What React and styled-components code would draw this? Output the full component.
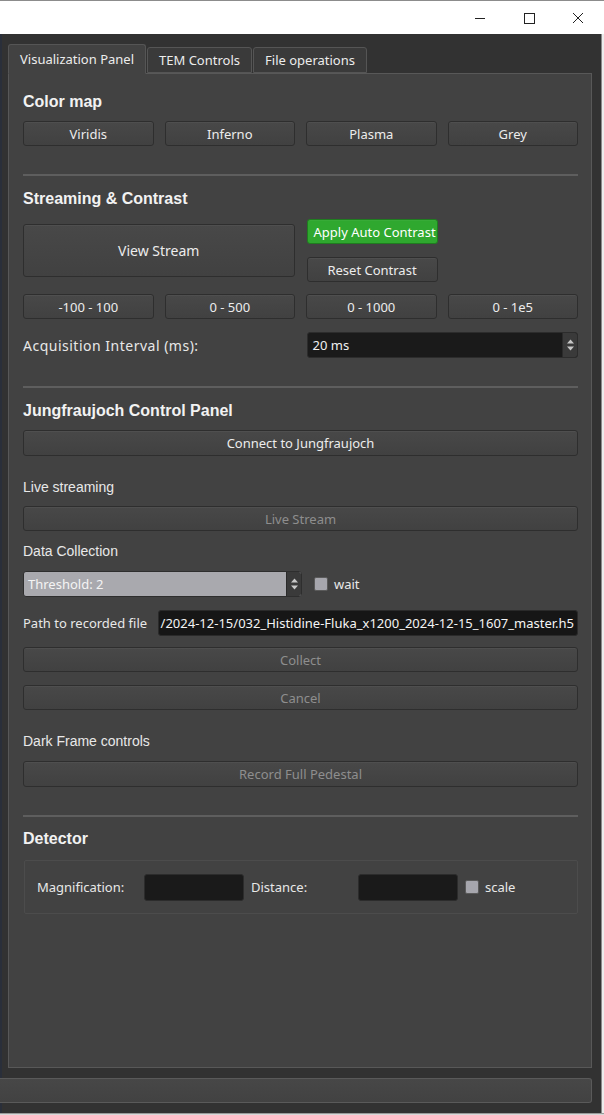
import React from "react";
import styled, { createGlobalStyle } from "styled-components";

const GlobalStyle = createGlobalStyle`
  html, body {
    margin: 0;
    padding: 0;
    background: #323232;
  }
  * {
    box-sizing: border-box;
  }
`;

const colorMaps = ["Viridis", "Inferno", "Plasma", "Grey"];
const ranges = ["-100 - 100", "0 - 500", "0 - 1000", "0 - 1e5"];

const SpinArrows = () => (
  <ArrowBox>
    <svg width="9" height="16" viewBox="0 0 9 16">
      <path d="M1 6.5 L4.5 2.5 L8 6.5 Z" fill="#c8c8c8" />
      <path d="M1 9.5 L4.5 13.5 L8 9.5 Z" fill="#c8c8c8" />
    </svg>
  </ArrowBox>
);

const App = () => {
  return (
    <>
      <GlobalStyle />
      <Window>
        <TitleBar>
          <WinButton>
            <svg width="12" height="12" viewBox="0 0 12 12">
              <path d="M1 6.5 H11" stroke="#222" strokeWidth="1" />
            </svg>
          </WinButton>
          <WinButton>
            <svg width="12" height="12" viewBox="0 0 12 12">
              <rect x="1.5" y="1.5" width="10" height="10" fill="none" stroke="#222" strokeWidth="1" />
            </svg>
          </WinButton>
          <WinButton>
            <svg width="12" height="12" viewBox="0 0 12 12">
              <path d="M1 1 L11 11 M11 1 L1 11" stroke="#222" strokeWidth="1" />
            </svg>
          </WinButton>
        </TitleBar>
        <Body>
          <Main>
            <TabArea>
              <TabBar>
                <Tab $active>Visualization Panel</Tab>
                <Tab>TEM Controls</Tab>
                <Tab>File operations</Tab>
              </TabBar>
              <Panel>
                <Heading>Color map</Heading>
                <ButtonRow $mt={11}>
                  {colorMaps.map((c) => (
                    <Button key={c}>{c}</Button>
                  ))}
                </ButtonRow>
                <Separator $mt={28} />

                <Heading $mt={13}>Streaming &amp; Contrast</Heading>
                <StreamGrid>
                  <Button $h={53} $big>View Stream</Button>
                  <StackCol>
                    <GreenButton>Apply Auto Contrast</GreenButton>
                    <Button>Reset Contrast</Button>
                  </StackCol>
                </StreamGrid>
                <ButtonRow $mt={12}>
                  {ranges.map((r) => (
                    <Button key={r}>{r}</Button>
                  ))}
                </ButtonRow>
                <HalfRow $mt={13}>
                  <FormLabel $wide>Acquisition Interval (ms):</FormLabel>
                  <SpinBox>
                    <SpinText>20 ms</SpinText>
                    <SpinArrows />
                  </SpinBox>
                </HalfRow>
                <Separator $mt={28} />

                <Heading $mt={13}>Jungfraujoch Control Panel</Heading>
                <Button $mt={11} $h={26}>Connect to Jungfraujoch</Button>
                <SubLabel $mt={23}>Live streaming</SubLabel>
                <Button $mt={11} disabled>Live Stream</Button>
                <SubLabel $mt={12}>Data Collection</SubLabel>
                <ThresholdRow>
                  <ThresholdBox>
                    <ThresholdText>Threshold: 2</ThresholdText>
                    <SpinArrows />
                  </ThresholdBox>
                  <CheckRow>
                    <CheckBox />
                    <CheckText>wait</CheckText>
                  </CheckRow>
                </ThresholdRow>
                <PathRow>
                  <FormLabel>Path to recorded file</FormLabel>
                  <PathEdit>
                    <span>/2024-12-15/032_Histidine-Fluka_x1200_2024-12-15_1607_master.h5</span>
                  </PathEdit>
                </PathRow>
                <Button $mt={11} disabled>Collect</Button>
                <Button $mt={13} disabled>Cancel</Button>
                <SubLabel $mt={23}>Dark Frame controls</SubLabel>
                <Button $mt={12} $h={26} disabled>Record Full Pedestal</Button>
                <Separator $mt={28} />

                <Heading $mt={12}>Detector</Heading>
                <GroupBox>
                  <FormLabel $w={107}>Magnification:</FormLabel>
                  <SmallEdit />
                  <FormLabel $w={107} $ml={7}>Distance:</FormLabel>
                  <SmallEdit />
                  <CheckRow $ml={7}>
                    <CheckBox />
                    <CheckText>scale</CheckText>
                  </CheckRow>
                </GroupBox>
              </Panel>
            </TabArea>
            <BottomBar />
          </Main>
          <RightEdge />
        </Body>
        <BottomLine />
      </Window>
    </>
  );
};

export default App;

const Window = styled.div`
  width: 604px;
  height: 1115px;
  display: flex;
  flex-direction: column;
  background: #323232;
  overflow: hidden;
`;

const TitleBar = styled.div`
  height: 34px;
  flex-shrink: 0;
  background: #ffffff;
  border-top: 1px solid #8c8c8c;
  display: flex;
  justify-content: flex-end;
  align-items: center;
  padding-right: 2px;
`;

const WinButton = styled.div`
  width: 49px;
  height: 32px;
  display: flex;
  align-items: center;
  justify-content: center;
`;

const Body = styled.div`
  flex: 1;
  display: flex;
`;

const Main = styled.div`
  width: 601px;
  display: flex;
  flex-direction: column;
  padding-top: 10px;
  border-left: 2px solid #2a2f3a;
`;

const RightEdge = styled.div`
  width: 3px;
  background: #ececec;
  border-left: 1px solid #8a8a8a;
`;

const BottomLine = styled.div`
  height: 2px;
  background: #d8d8d8;
  border-top: 1px solid #9a9a9a;
`;

const TabArea = styled.div`
  padding: 0 9px 0 6px;
  display: flex;
  flex-direction: column;
`;

const TabBar = styled.div`
  display: flex;
  align-items: flex-end;
  height: 29px;
  gap: 1px;
  position: relative;
  z-index: 1;
`;

const Tab = styled.div`
  height: ${(p) => (p.$active ? "30px" : "26px")};
  margin-bottom: ${(p) => (p.$active ? "-1px" : "0")};
  padding: ${(p) => (p.$active ? "0 11px" : "0 11px")};
  display: flex;
  align-items: center;
  background: ${(p) => (p.$active ? "#424242" : "#3a3a3a")};
  border: 1px solid #555555;
  border-bottom: ${(p) => (p.$active ? "1px solid #424242" : "1px solid #555555")};
  border-radius: 3px 3px 0 0;
  color: #ececec;
  font-family: "Noto Sans", "Open Sans", sans-serif;
  font-size: 13px;
`;

const Panel = styled.div`
  height: 995px;
  background: #424242;
  border: 1px solid #585858;
  padding: 18px 13px 0 14px;
  display: flex;
  flex-direction: column;
`;

const Heading = styled.div`
  margin-top: ${(p) => p.$mt || 0}px;
  height: 18px;
  line-height: 20px;
  font-family: "Liberation Sans", Arial, sans-serif;
  font-weight: 700;
  font-size: 16px;
  color: #f2f2f2;
`;

const SubLabel = styled.div`
  margin-top: ${(p) => p.$mt || 0}px;
  height: 16px;
  line-height: 16px;
  font-family: "Liberation Sans", Arial, sans-serif;
  font-size: 14px;
  color: #e8e8e8;
`;

const FormLabel = styled.div`
  flex-shrink: 0;
  width: ${(p) => (p.$w ? `${p.$w}px` : "auto")};
  margin-left: ${(p) => p.$ml || 0}px;
  font-family: "Noto Sans", "Open Sans", sans-serif;
  font-size: ${(p) => (p.$wide ? "14px" : "13px")};
  letter-spacing: ${(p) => (p.$wide ? "0.5px" : "0")};
  color: #e8e8e8;
  white-space: nowrap;
`;

const Separator = styled.div`
  margin-top: ${(p) => p.$mt || 0}px;
  height: 2px;
  background: #5e5e5e;
`;

const ButtonRow = styled.div`
  margin-top: ${(p) => p.$mt || 0}px;
  display: grid;
  grid-template-columns: repeat(4, 1fr);
  gap: 11px;
`;

const Button = styled.button`
  margin-top: ${(p) => p.$mt || 0}px;
  height: ${(p) => p.$h || 25}px;
  width: 100%;
  padding: 0 6px;
  background: linear-gradient(#484848, #414141);
  border: 1px solid #2e2e2e;
  border-radius: 3px;
  box-shadow: inset 0 1px 0 rgba(255, 255, 255, 0.04);
  color: ${(p) => (p.disabled ? "#8e8e8e" : "#ececec")};
  font-family: "Noto Sans", "Open Sans", sans-serif;
  font-size: ${(p) => (p.$big ? "14px" : "13px")};
  white-space: nowrap;
`;

const GreenButton = styled(Button)`
  background: #2fa82f;
  border: 1px solid #1f7d1f;
  color: #ffffff;
`;

const StreamGrid = styled.div`
  margin-top: 12px;
  display: grid;
  grid-template-columns: 1fr 1fr;
  column-gap: 12px;
  align-items: center;
`;

const StackCol = styled.div`
  display: flex;
  flex-direction: column;
  gap: 13px;
  width: 131px;
`;

const HalfRow = styled.div`
  margin-top: ${(p) => p.$mt || 0}px;
  display: grid;
  grid-template-columns: 1fr 1fr;
  column-gap: 12px;
  align-items: center;
`;

const SpinBox = styled.div`
  height: 26px;
  display: flex;
  background: #1a1a1a;
  border: 1px solid #2c2c2c;
  border-radius: 3px;
  overflow: hidden;
`;

const SpinText = styled.div`
  flex: 1;
  display: flex;
  align-items: center;
  padding-left: 5px;
  font-family: "Noto Sans", "Open Sans", sans-serif;
  font-size: 13px;
  color: #f0f0f0;
`;

const ArrowBox = styled.div`
  width: 15px;
  display: flex;
  align-items: center;
  justify-content: center;
  background: #3a3a3a;
  border-left: 1px solid #2a2a2a;
`;

const ThresholdRow = styled.div`
  margin-top: 12px;
  display: flex;
  align-items: center;
`;

const ThresholdBox = styled.div`
  width: 279px;
  height: 26px;
  display: flex;
  border: 1px solid #2e2e2e;
  border-radius: 3px;
  overflow: hidden;
  background: #a9a9ae;
`;

const ThresholdText = styled.div`
  flex: 1;
  display: flex;
  align-items: center;
  padding-left: 4px;
  font-family: "Noto Sans", "Open Sans", sans-serif;
  font-size: 13px;
  color: #f4f4f4;
`;

const CheckRow = styled.div`
  display: flex;
  align-items: center;
  gap: 6px;
  margin-left: ${(p) => (p.$ml !== undefined ? p.$ml : 12)}px;
`;

const CheckBox = styled.div`
  width: 14px;
  height: 14px;
  background: #a6a6ad;
  border: 1px solid #5a5a5a;
  border-radius: 2px;
`;

const CheckText = styled.span`
  font-family: "Noto Sans", "Open Sans", sans-serif;
  font-size: 13px;
  color: #e8e8e8;
`;

const PathRow = styled.div`
  margin-top: 13px;
  display: flex;
  align-items: center;
  gap: 11px;
`;

const PathEdit = styled.div`
  flex: 1;
  height: 26px;
  display: flex;
  align-items: center;
  justify-content: flex-end;
  overflow: hidden;
  padding: 0 3px;
  background: #161616;
  border: 1px solid #2a2a2a;
  border-radius: 3px;
  font-family: "Noto Sans", "Open Sans", sans-serif;
  font-size: 13px;
  color: #f4f4f4;
  white-space: nowrap;
`;

const GroupBox = styled.div`
  margin-top: 13px;
  margin-left: 1px;
  height: 54px;
  display: flex;
  align-items: center;
  padding-left: 12px;
  border: 1px solid #4c4c4c;
  border-radius: 2px;
`;

const SmallEdit = styled.div`
  width: 100px;
  height: 27px;
  flex-shrink: 0;
  background: #1a1a1a;
  border: 1px solid #2c2c2c;
  border-radius: 3px;
`;

const BottomBar = styled.div`
  margin-top: 10px;
  margin-right: 9px;
  margin-left: -2px;
  height: 25px;
  background: linear-gradient(#474747, #424242);
  border: 1px solid #5a5a5a;
  border-left: none;
  border-radius: 0 3px 3px 0;
`;
